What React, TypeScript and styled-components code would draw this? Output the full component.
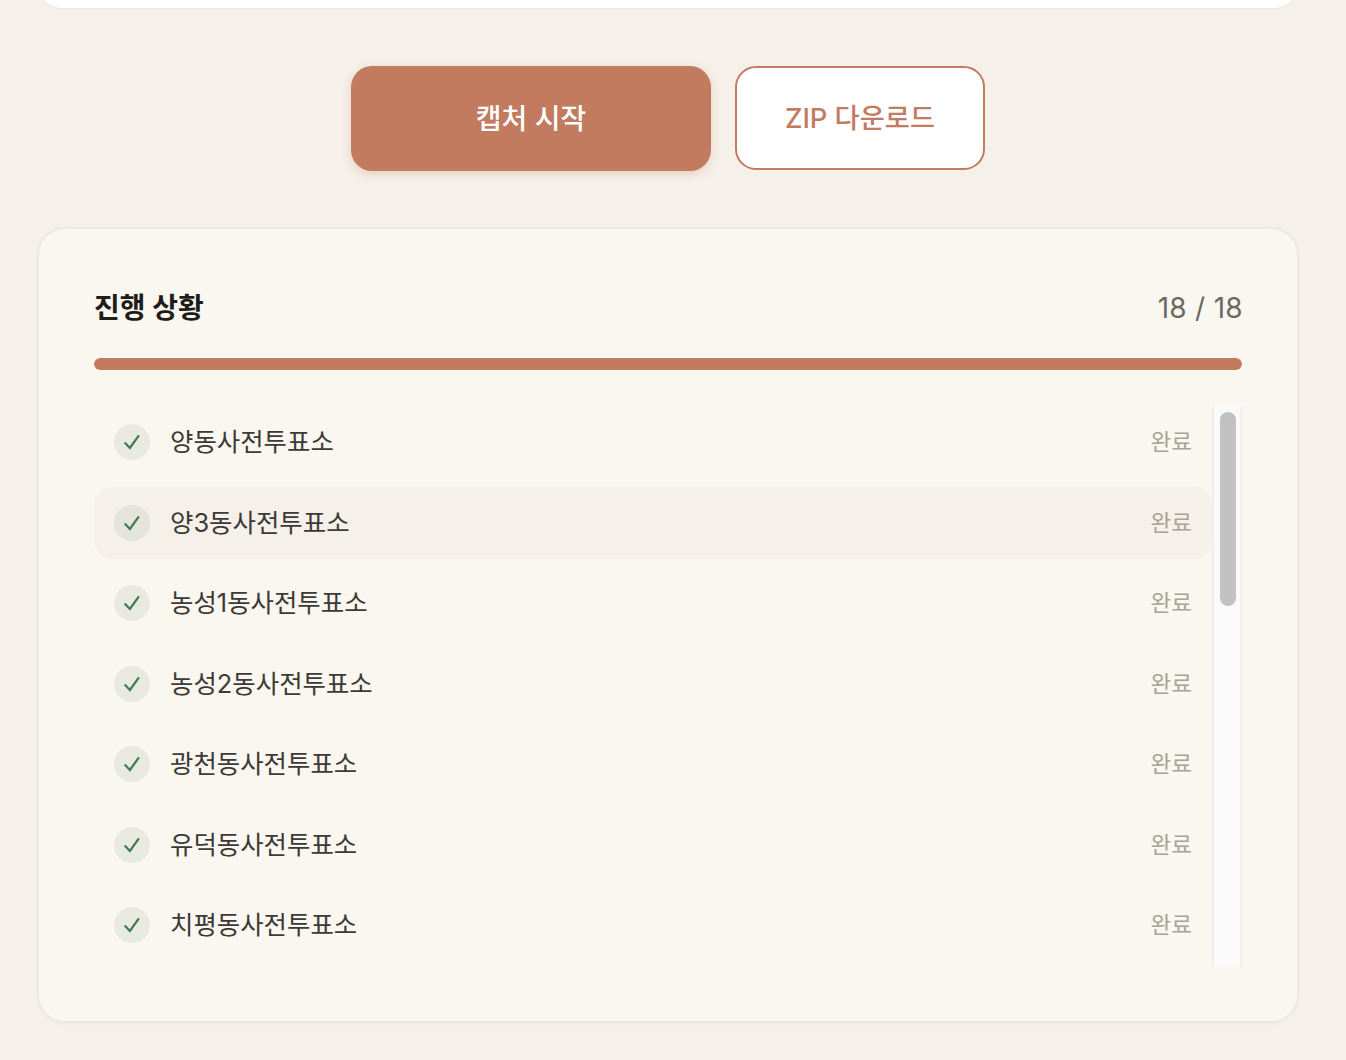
import React from "react";
import styled, { createGlobalStyle } from "styled-components";

const Global = createGlobalStyle`
  html, body { margin: 0; padding: 0; background: #f5f0e9; }
  body { font-family: Inter, "Noto Sans CJK KR", sans-serif; height: 1060px; overflow: hidden; }
  * { box-sizing: border-box; }
`;

const Page = styled.main`
  padding: 0 47px 0 37px;
  width: 1346px;
`;

const TopCard = styled.div`
  height: 60px;
  margin: -52px 1px 0;
  background: #fff;
  border-radius: 24px;
  box-shadow: 0 1px 3px rgba(60, 50, 40, 0.06);
`;

const Actions = styled.div`
  display: flex;
  justify-content: center;
  align-items: flex-start;
  gap: 24px;
  margin-top: 58px;
`;

const BaseButton = styled.button`
  font-family: inherit;
  font-weight: 500;
  border-radius: 21px;
  padding: 0 0 4px;
  cursor: pointer;
`;

const PrimaryButton = styled(BaseButton)`
  width: 360px;
  height: 105px;
  font-size: 28px;
  background: #c27b5f;
  color: #fff;
  border: 0;
  box-shadow: 0 3px 10px rgba(194, 123, 95, 0.28);
`;

const SecondaryButton = styled(BaseButton)`
  width: 250px;
  height: 104px;
  font-size: 27.3px;
  background: #fff;
  color: #c27b5f;
  border: 2px solid #c27b5f;
`;

const ProgressCard = styled.section`
  margin-top: 56px;
  height: 796px;
  background: #faf7f0;
  border: 2px solid #ece8e0;
  border-radius: 28px;
  padding: 56px 55px;
  box-shadow: 0 1px 4px rgba(60, 50, 40, 0.03);
`;

const Header = styled.header`
  display: flex;
  justify-content: space-between;
  align-items: center;
  height: 46px;
`;

const Title = styled.h2`
  margin: 0 0 4px;
  font-size: 28px;
  font-weight: 700;
  color: #1f1d1a;
`;

const Count = styled.span`
  margin-right: -1px;
  font-size: 28px;
  letter-spacing: 0.3px;
  color: #6d6862;
`;

const Bar = styled.div`
  margin-top: 27px;
  height: 12px;
  border-radius: 6px;
  background: #ece7df;
  overflow: hidden;
`;

const BarFill = styled.div`
  height: 100%;
  background: #c27b5f;
  border-radius: 6px;
`;

const ListFrame = styled.div`
  display: flex;
  margin-top: 36px;
  height: 560px;
`;

const List = styled.ul`
  flex: 1;
  min-width: 0;
  list-style: none;
  margin: 0;
  padding: 0;
  overflow: hidden;
`;

const ScrollTrack = styled.div`
  flex: none;
  width: 30px;
  padding: 6px 4px 0 6px;
  background: #fafafa;
  border-left: 2px solid #efeeea;
  border-right: 2px solid #f1f0ed;
`;

const ScrollThumb = styled.div`
  height: 194px;
  border-radius: 8px;
  background: #c1c1c1;
`;

const Row = styled.li<{ $active?: boolean }>`
  display: flex;
  align-items: center;
  gap: 20px;
  height: 72px;
  padding: 0 20px;
  margin-bottom: 8.5px;
  border-radius: 18px;
  background: ${(p) => (p.$active ? "#f5f0e9" : "transparent")};
`;

const Badge = styled.span`
  flex: none;
  display: flex;
  align-items: center;
  justify-content: center;
  width: 36px;
  height: 36px;
  border-radius: 50%;
  background: rgba(74, 124, 89, 0.1);
  color: #40795a;
`;

const Name = styled.span`
  flex: 1;
  padding-bottom: 4.4px;
  font-size: 25.45px;
  color: #3d3a36;
`;

const Status = styled.span`
  padding-bottom: 4px;
  font-size: 22.5px;
  color: #a8a398;
`;

const CheckMark = () => (
  <svg width="20" height="20" viewBox="0 0 20 20" fill="none" stroke="currentColor" strokeWidth="2.2" strokeLinecap="butt" strokeLinejoin="miter">
    <path d="M2.7 10.6 L7.9 16 L16.9 3.4" />
  </svg>
);

const stations = [
  "양동", "양3동", "농성1동", "농성2동", "광천동", "유덕동", "치평동", "상무1동", "상무2동",
  "화정1동", "화정2동", "화정3동", "화정4동", "서창동", "금호1동", "금호2동", "풍암동", "동천동",
];

export default function App() {
  return (
    <Page>
      <Global />
      <TopCard />
      <Actions>
        <PrimaryButton>캡처 시작</PrimaryButton>
        <SecondaryButton>ZIP 다운로드</SecondaryButton>
      </Actions>
      <ProgressCard>
        <Header>
          <Title>진행 상황</Title>
          <Count>18 / 18</Count>
        </Header>
        <Bar>
          <BarFill style={{ width: `${(18 / 18) * 100}%` }} />
        </Bar>
        <ListFrame>
          <List>
            {stations.map((s, i) => (
              <Row key={s} $active={i === 1}>
                <Badge>
                  <CheckMark />
                </Badge>
                <Name>{s}사전투표소</Name>
                <Status>완료</Status>
              </Row>
            ))}
          </List>
          <ScrollTrack>
            <ScrollThumb />
          </ScrollTrack>
        </ListFrame>
      </ProgressCard>
    </Page>
  );
}
